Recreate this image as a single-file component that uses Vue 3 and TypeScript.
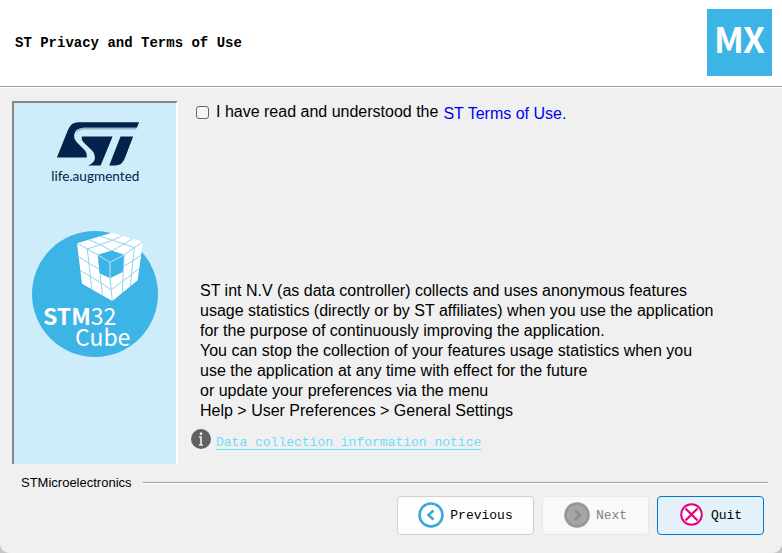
<script setup lang="ts">
import { ref } from 'vue'

const accepted = ref(false)

const notice: string[] = [
  'ST int N.V (as data controller) collects and uses anonymous features',
  'usage statistics (directly or by ST affiliates) when you use the application',
  'for the purpose of continuously improving the application.',
  'You can stop the collection of your features usage statistics when you',
  'use the application at any time with effect for the future',
  'or update your preferences via the menu',
  'Help > User Preferences > General Settings',
]
</script>

<template>
  <div class="window">
    <header class="header">
      <h1 class="title">ST Privacy and Terms of Use</h1>
      <svg class="mx" viewBox="0 0 65 67" aria-hidden="true">
        <rect width="65" height="67" fill="#3cb4e6" />
        <text class="mx-text" x="7 36" y="44">MX</text>
      </svg>
    </header>

    <main class="main">
      <aside class="side">
        <svg class="st-logo" viewBox="120 78 273 190" aria-hidden="true">
          <g fill="#03234b">
            <path d="M140 188 L174 104 Q183 82 205 82 H388 L381 98 H222 Q192 100 192 122 Q192 135 202 144 L222 164 Q232 174 230 188 Z" />
            <path d="M215 125 H308 L272 212 H234 Q255 204 255 187 Q255 175 246 167 L221 143 Q213 135 215 125 Z" />
            <path d="M332 125 H370 L345 190 Q337 212 316 212 H298 Z" />
          </g>
          <path d="M218 98 H381 L379 104 H222 Q205 105 197 117 Q200 100 218 98 Z" fill="#93b5cf" />
          <text class="st-text" x="123" y="258">life.augmented</text>
        </svg>
        <svg class="cube-logo" viewBox="0 0 126 126" aria-hidden="true">
          <circle cx="63" cy="63" r="63" fill="#3cb4e6" />
          <g transform="translate(43 -6) scale(.33333)" stroke-linejoin="round">
            <path d="M6 55 L111 23 L204 50 L188 166 L112 228 L21 176 Z" fill="#fff" />
            <g fill="none" stroke="#8ed2ef" stroke-width="3">
              <path d="M6 55 L37 72 L69 90 M204 50 L178 68 L147 90 M105 160 L112 228" />
              <path d="M41 44 L76 59 L110 78 L147 90 M76 34 L112 46 L147 57 L178 68 M37 72 L76 59 L112 46 L142 32 M69 90 L110 78 L147 57 L173 41" />
              <path d="M37 72 L50 192 M69 90 L82 210 M147 90 L142 203 M178 68 L166 184" />
              <path d="M11 96 L44 116 L73 133 M16 137 L48 155 L79 174 L109 195 M199 90 L173 108 L145 124 M194 129 L169 150 L143 168 L109 195" />
            </g>
            <path d="M69 90 L110 77 L147 90 L143 141 L105 160 L74 145 Z" fill="#3cb4e6" />
            <path d="M69 90 L105 112 L147 90 M105 112 L105 160" fill="none" stroke="#bfe6f7" stroke-width="3" />
          </g>
          <text class="cube-text" x="11" y="94"><tspan class="cube-bold">STM</tspan>32</text>
          <text class="cube-text" x="43" y="115">Cube</text>
        </svg>
      </aside>

      <section class="content">
        <div class="terms">
          <input id="accept" v-model="accepted" class="check" type="checkbox" />
          <label class="accept" for="accept">I have read and understood the</label>
          <a class="terms-link" href="#terms">ST Terms of Use.</a>
        </div>
        <div class="privacy">
          <p class="notice">
            <template v-for="(line, i) in notice" :key="i">{{ line }}<br v-if="i < notice.length - 1" /></template>
          </p>
          <div class="info">
            <svg class="info-icon" viewBox="0 0 20 20" aria-hidden="true">
              <circle cx="10" cy="10" r="10" fill="#616161" />
              <path d="M10 3.5v2.3" stroke="#fff" stroke-width="2.2" />
              <path d="M8 8h2v8M8 16h4" fill="none" stroke="#e8e8e8" stroke-width="1.7" />
            </svg>
            <a class="info-link" href="#notice">Data collection information notice</a>
          </div>
        </div>
      </section>
    </main>

    <footer class="footer">
      <div class="brand">
        <span>STMicroelectronics</span>
        <div class="rule"></div>
      </div>
      <div class="actions">
        <button class="button wide" type="button">
          <svg class="icon" viewBox="0 0 26 26" aria-hidden="true">
            <circle cx="13" cy="13" r="11.5" fill="#fff" stroke="#39a9dc" stroke-width="2.6" />
            <path d="M15.5 8.5L10.5 13l5 4.5" fill="none" stroke="#39a9dc" stroke-width="2.6" />
          </svg>
          <span>Previous</span>
        </button>
        <button class="button" type="button" disabled>
          <svg class="icon" viewBox="0 0 26 26" aria-hidden="true">
            <circle cx="13" cy="13" r="11.5" fill="#a6a6a6" stroke="#969696" stroke-width="2.6" />
            <path d="M11 8.5l5 4.5-5 4.5" fill="none" stroke="#8c8c8c" stroke-width="2.6" />
          </svg>
          <span>Next</span>
        </button>
        <button class="button primary" type="button">
          <svg class="icon" viewBox="0 0 26 26" aria-hidden="true">
            <circle cx="12.5" cy="12.5" r="10.3" fill="#fff" stroke="#e6007e" stroke-width="2" />
            <path d="M6.5 6.5l12 12M18.5 6.5l-12 12" stroke="#e6007e" stroke-width="2.2" />
          </svg>
          <span>Quit</span>
        </button>
      </div>
    </footer>
  </div>
</template>

<style>
html {
  background: #c4c4c4;
}
</style>

<style scoped>
.window {
  display: flex;
  flex-direction: column;
  box-sizing: border-box;
  min-height: 100vh;
  background: #f0f0f0;
  border-radius: 0 0 9px 9px;
  color: #000;
  font-family: "Liberation Sans", Arial, sans-serif;
  font-size: 16px;
  line-height: 20px;
}
.header {
  display: flex;
  align-items: center;
  justify-content: space-between;
  padding: 9px 10px 10px 15px;
  background: #fff;
  border-bottom: 1px solid #a0a0a0;
  box-shadow: 0 1px 0 #fff;
}
.title {
  margin: 0;
  font-family: "Liberation Mono", "Courier New", monospace;
  font-size: 14px;
  font-weight: 700;
}
.mx {
  width: 65px;
  height: 67px;
}
.mx-text {
  fill: #fff;
  font-family: "Noto Sans CJK SC", sans-serif;
  font-size: 35px;
  font-weight: 700;
}
.main {
  display: flex;
  flex: 1;
  gap: 13px;
  padding: 14px 12px 0;
}
.side {
  display: flex;
  flex: none;
  flex-direction: column;
  align-items: center;
  gap: 47px;
  box-sizing: border-box;
  width: 166px;
  padding-top: 18px;
  background: #ceecfa;
  border: 2px solid #858585;
  border-right-color: #fff;
  border-bottom: 0;
}
.st-logo {
  width: 91px;
  height: 63px;
}
.st-text {
  fill: #03234b;
  font-family: Lato, sans-serif;
  font-size: 41px;
}
.cube-logo {
  width: 126px;
  height: 126px;
  overflow: visible;
}
.cube-text {
  fill: #fff;
  font-family: "Noto Sans CJK SC", sans-serif;
  font-size: 23px;
}
.cube-bold {
  font-weight: 700;
}
.content {
  display: flex;
  flex: 1;
  flex-direction: column;
  justify-content: space-between;
  padding-bottom: 11px;
}
.terms {
  display: flex;
  align-items: flex-start;
  padding-left: 5px;
}
.check {
  appearance: none;
  width: 13px;
  height: 13px;
  margin: 5px 7px 0 0;
  background: #f5f5f5;
  border: 1px solid #666;
  border-radius: 3px;
}
.check:checked {
  background: #0067c0;
}
.accept {
  padding-top: 1px;
}
.terms-link {
  margin-left: 5px;
  padding-top: 3px;
  color: #0000f0;
  text-decoration: none;
}
.notice {
  margin: 0 0 8px 9px;
}
.info {
  display: flex;
  align-items: flex-start;
  gap: 5px;
}
.info-icon {
  width: 20px;
  height: 20px;
}
.info-link {
  padding-top: 4px;
  color: #6fdcfa;
  font-family: "Liberation Mono", "Courier New", monospace;
  font-size: 13px;
  text-underline-offset: 3px;
}
.footer {
  padding: 9px 14px 18px 21px;
}
.brand {
  display: flex;
  gap: 11px;
  font-size: 13px;
}
.rule {
  flex: 1;
  height: 1px;
  margin-top: 9px;
  background: #a0a0a0;
  box-shadow: 0 1px 0 #fff;
}
.actions {
  display: flex;
  justify-content: flex-end;
  gap: 8px;
  padding: 3px 4px 0 0;
}
.button {
  display: flex;
  align-items: center;
  justify-content: center;
  gap: 6px;
  box-sizing: border-box;
  width: 107px;
  height: 39px;
  padding: 0 0 2px;
  background: #fdfdfd;
  border: 1px solid #d0d0d0;
  border-radius: 4px;
  color: #000;
  font-family: "Liberation Mono", "Courier New", monospace;
  font-size: 13px;
}
.button span {
  padding-top: 2px;
}
.wide {
  width: 137px;
}
.button:disabled {
  background: #f9f9f9;
  border-color: #e8e8e8;
  color: #838383;
}
.primary {
  background: #e5f1fb;
  border-color: #0078d4;
}
.icon {
  width: 26px;
  height: 26px;
}
</style>
